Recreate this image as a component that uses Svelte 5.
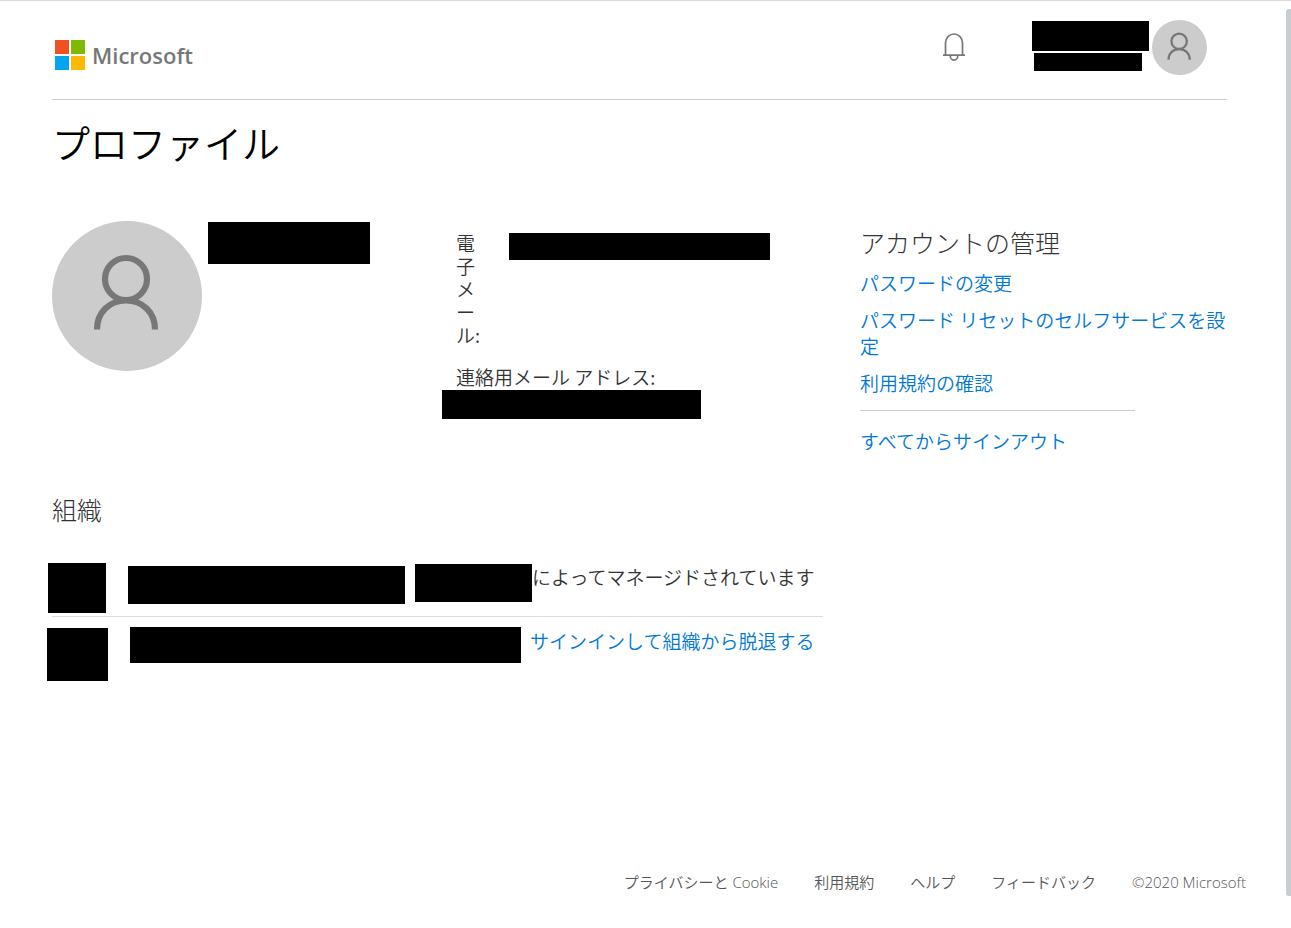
<script lang="ts">
  const accountLinks = [
    'パスワードの変更',
    'パスワード リセットのセルフサービスを設定',
    '利用規約の確認'
  ];
  const footerLinks = ['プライバシーと Cookie', '利用規約', 'ヘルプ', 'フィードバック'];
</script>

{#snippet person()}
  <svg viewBox="0 0 150 150" aria-hidden="true">
    <g fill="none" stroke="#777" stroke-width="6.200">
      <circle cx="74" cy="58" r="21" />
      <path d="M45 108.500C45 91 57.500 79.500 74 79.500S103 91 103 108.500" />
    </g>
  </svg>
{/snippet}

<div class="page">
  <header>
    <a class="brand" href="#home">
      <svg width="30" height="30" viewBox="0 0 30 30" aria-hidden="true">
        <path fill="#f25022" d="M0 0h14v14H0z" />
        <path fill="#7fba00" d="M16 0h14v14H16z" />
        <path fill="#00a4ef" d="M0 16h14v14H0z" />
        <path fill="#ffb900" d="M16 16h14v14H16z" />
      </svg>
      <span>Microsoft</span>
    </a>
    <button class="bell" aria-label="通知">
      <svg width="24" height="30" viewBox="0 0 24 30" fill="none" stroke="#777" stroke-width="1.700">
        <path d="M3.500 23V11a8.500 9 0 0 1 17 0v12" />
        <path d="M1 23.200h22M8.200 23.500a3.800 4.700 0 0 0 7.600 0" />
      </svg>
    </button>
    <button class="me" aria-label="アカウント">
      <span class="names">
        <span class="mask user"></span>
        <span class="mask tenant"></span>
      </span>
      <span class="avatar small">{@render person()}</span>
    </button>
  </header>

  <h1>プロファイル</h1>

  <main>
    <section class="identity">
      <div class="avatar">{@render person()}</div>
      <div class="mask name"></div>
    </section>

    <dl class="contact">
      <div class="row">
        <dt class="narrow">電子メール:</dt>
        <dd class="mask mail"></dd>
      </div>
      <div>
        <dt>連絡用メール アドレス:</dt>
        <dd class="mask alternate"></dd>
      </div>
    </dl>

    <nav class="account">
      <h2>アカウントの管理</h2>
      {#each accountLinks as link}
        <a href="#account">{link}</a>
      {/each}
      <hr />
      <a href="#signout">すべてからサインアウト</a>
    </nav>

    <section class="orgs">
      <h2>組織</h2>
      <div class="org managed">
        <div class="mask logo"></div>
        <div class="mask title"></div>
        <div class="mask owner"></div>
        <span>によってマネージドされています</span>
      </div>
      <div class="org guest">
        <div class="mask logo"></div>
        <div class="mask title"></div>
        <a href="#leave">サインインして組織から脱退する</a>
      </div>
    </section>
  </main>

  <footer>
    {#each footerLinks as link}
      <a href="#footer">{link}</a>
    {/each}
    <span>©2020 Microsoft</span>
  </footer>
  <div class="scroll-thumb"></div>
</div>

<style>
:global(body) {
  background: #fff;
}
.page {
  position: relative;
  box-sizing: border-box;
  min-height: 100vh;
  display: flex;
  flex-direction: column;
  padding: 0 64px 33px 52px;
  border-top: 1px solid #d9d9dd;
  color: #333;
  font-family: "Noto Sans CJK JP", sans-serif;
  font-size: 19px;
  font-weight: 350;
  line-height: 26px;
}
h1, h2, dl, dd, hr {
  margin: 0;
}
h1 {
  font-weight: 350;
}
h2 {
  font-weight: 300;
}
a {
  color: #0078d7;
  text-decoration: none;
}
button {
  display: flex;
  padding: 0;
  border: 0;
  background: none;
}
svg {
  display: block;
}
.mask {
  display: block;
  background: #000;
}

header {
  display: flex;
  align-items: center;
  height: 98px;
  padding: 0 20px 0 3px;
  border-bottom: 1px solid #ccc;
}
.brand {
  display: flex;
  align-items: center;
  gap: 7px;
  margin: 9px auto 0 0;
  color: #777;
  font-family: "Open Sans", sans-serif;
  font-size: 22px;
  font-weight: 600;
}
.bell {
  margin: 0 66px 6px 0;
}
.me {
  gap: 3px;
  margin-bottom: 6px;
}
.names {
  display: flex;
  flex-direction: column;
  gap: 2px;
  padding-top: 1px;
}
.user {
  width: 117px;
  height: 30px;
}
.tenant {
  width: 108px;
  height: 18px;
  margin-left: 2px;
}
.avatar {
  flex: none;
  width: 150px;
  height: 150px;
  border-radius: 50%;
  background: #ccc;
}
.avatar.small {
  width: 55px;
  height: 55px;
}

h1 {
  margin: 16px 0 53px;
  color: #000;
  font-size: 38px;
  line-height: 52px;
}
h2 {
  font-size: 25px;
  line-height: 34px;
}
main {
  display: grid;
  grid-template-columns: repeat(3, minmax(0, 1fr));
  column-gap: 37px;
  row-gap: 38px;
}
.identity {
  display: flex;
  gap: 6px;
}
.name {
  width: 162px;
  height: 42px;
  margin-top: 1px;
}
.contact {
  display: flex;
  flex-direction: column;
  gap: 19px;
  padding-top: 10px;
  line-height: 23px;
}
.row {
  display: flex;
  gap: 25px;
}
.narrow {
  width: 28px;
  line-break: anywhere;
}
.mail {
  width: 261px;
  height: 27px;
  margin-top: 2px;
}
.alternate {
  width: 259px;
  height: 29px;
  margin: 2px 0 0 -14px;
}
.account {
  display: flex;
  flex-direction: column;
  gap: 11px;
  padding-top: 4px;
}
.account hr {
  width: 75%;
  margin: 3px 0 6px;
  border: 0;
  border-top: 1px solid #ccc;
}

.orgs {
  grid-column: span 2;
}
.org {
  display: flex;
  align-items: flex-start;
  white-space: nowrap;
}
.managed {
  margin: 37px 0 10px -4px;
  padding-bottom: 4px;
  position: relative;
}
.managed::after {
  content: "";
  position: absolute;
  left: 4px;
  right: 0;
  bottom: 0;
  border-bottom: 1px solid #ddd;
}
.managed .logo {
  width: 58px;
  height: 50px;
}
.managed .title {
  width: 277px;
  height: 38px;
  margin: 3px 10px 0 22px;
}
.owner {
  width: 117px;
  height: 38px;
  margin-top: 1px;
}
.org span, .org a {
  padding-top: 1px;
}
.guest {
  margin-left: -5px;
}
.guest .logo {
  width: 61px;
  height: 53px;
  margin-top: 1px;
}
.guest .title {
  width: 391px;
  height: 36px;
  margin: 0 9px 0 22px;
}

footer {
  display: flex;
  flex-wrap: wrap;
  justify-content: flex-end;
  gap: 36px;
  margin: auto -19px 0 0;
  color: #555;
  font-family: "Open Sans", "Noto Sans CJK JP", sans-serif;
  font-size: 15px;
}
footer a {
  color: #555;
}
.scroll-thumb {
  position: absolute;
  top: 8px;
  right: 0;
  bottom: 32px;
  width: 5px;
  border-radius: 3px 0 0 3px;
  background: #c8cdd1;
}
</style>
